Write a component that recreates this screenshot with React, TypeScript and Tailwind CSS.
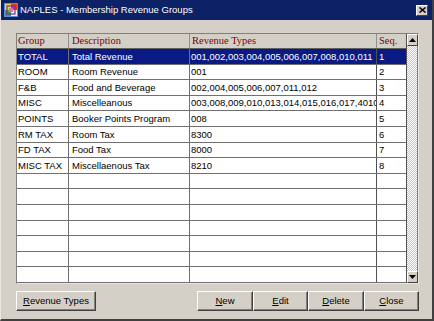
import React from 'react'

const rows = [
  { group: 'TOTAL', desc: 'Total Revenue', types: '001,002,003,004,005,006,007,008,010,011', seq: '1' },
  { group: 'ROOM', desc: 'Room Revenue', types: '001', seq: '2' },
  { group: 'F&B', desc: 'Food and Beverage', types: '002,004,005,006,007,011,012', seq: '3' },
  { group: 'MISC', desc: 'Miscelleanous', types: '003,008,009,010,013,014,015,016,017,4010', seq: '4' },
  { group: 'POINTS', desc: 'Booker Points Program', types: '008', seq: '5' },
  { group: 'RM TAX', desc: 'Room Tax', types: '8300', seq: '6' },
  { group: 'FD TAX', desc: 'Food Tax', types: '8000', seq: '7' },
  { group: 'MISC TAX', desc: 'Miscellaenous Tax', types: '8210', seq: '8' },
]

const blank = Array.from({ length: 7 }, () => ({ group: '', desc: '', types: '', seq: '' }))

const sans = { fontFamily: '"Liberation Sans", Arial, sans-serif' }

const WinButton = ({ label, hot, className }: { label: string; hot: number; className: string }) => (
  <button
    className={`h-[20px] bg-[#d4d0c8] border border-t-white border-l-white border-b-[#404040] border-r-[#404040] shadow-[inset_-1px_-1px_0_#808080] text-[9.5px] text-black flex items-center justify-center ${className}`}
    style={sans}
  >
    {label.slice(0, hot)}
    <span className="underline">{label[hot]}</span>
    {label.slice(hot + 1)}
  </button>
)

const AppIcon = () => (
  <svg width="14" height="14" viewBox="0 0 14 14">
    <rect x="0" y="0" width="14" height="14" fill="#5a8fd0" />
    <rect x="1" y="1" width="6" height="6" fill="#f2d23a" />
    <rect x="7" y="1" width="6" height="6" fill="#d83a2a" />
    <rect x="1" y="7" width="6" height="6" fill="#3aa04a" />
    <rect x="7" y="7" width="6" height="6" fill="#f0f0f0" />
    <rect x="3" y="3" width="8" height="8" fill="none" stroke="#7b2ea0" strokeWidth="1.2" />
    <rect x="5" y="5" width="4" height="4" fill="#e86ab0" />
  </svg>
)

const Row = ({ r, selected }: { r: typeof rows[number]; selected?: boolean }) => (
  <div
    className={`grid grid-cols-[52px_121px_187px_29px] h-[15.67px] border-b border-[#707070] text-[9.5px] leading-none ${
      selected ? 'bg-[#0a1a84] text-white' : 'bg-white text-black'
    }`}
    style={sans}
  >
    <div className="border-r border-[#707070] pl-[1px] flex items-center overflow-hidden whitespace-nowrap">{r.group}</div>
    <div className="border-r border-[#707070] pl-[3px] flex items-center overflow-hidden whitespace-nowrap">{r.desc}</div>
    <div className="border-r border-[#505050] pl-[1px] flex items-center overflow-hidden whitespace-nowrap">{r.types}</div>
    <div className="pl-[2px] flex items-center overflow-hidden whitespace-nowrap">{r.seq}</div>
  </div>
)

const ArrowBtn = ({ up }: { up?: boolean }) => (
  <div className="h-[12px] bg-[#d4d0c8] border border-t-white border-l-white border-b-[#404040] border-r-[#404040] flex items-center justify-center">
    <svg width="7" height="4" viewBox="0 0 7 4">
      {up ? <polygon points="3.5,0 7,4 0,4" fill="#000" /> : <polygon points="0,0 7,0 3.5,4" fill="#000" />}
    </svg>
  </div>
)

export default function App() {
  return (
    <div className="w-[434px] h-[321px] bg-[#d4d0c8] flex flex-col border-l border-l-[#e8e6e0] border-r-2 border-r-[#404040] border-b-2 border-b-[#404040]">
      <div className="h-[20px] bg-[#0c2166] flex items-center pl-[3px] pr-[4px]">
        <AppIcon />
        <span className="ml-[2px] text-white text-[9.5px] flex-1" style={sans}>
          NAPLES - Membership Revenue Groups
        </span>
        <div className="w-[12px] h-[11px] bg-[#d4d0c8] border border-t-white border-l-white border-b-[#404040] border-r-[#404040] flex items-center justify-center">
          <svg width="7" height="6" viewBox="0 0 7 6">
            <path d="M0.5 0.5 L6.5 5.5 M6.5 0.5 L0.5 5.5" stroke="#000" strokeWidth="1.5" />
          </svg>
        </div>
      </div>

      <div className="flex flex-col pl-[15px] pt-[13px]">
        <div className="w-[403px] h-[251px] flex border border-t-[#808080] border-l-[#808080] border-b-[#e8e6e0] border-r-[#e8e6e0]">
          <div className="flex flex-col w-[389px] bg-white">
            <div
              className="grid grid-cols-[52px_121px_187px_29px] h-[15px] bg-[#d4d0c8] border-b border-[#606060] text-[10.5px] text-[#800000] leading-none"
              style={{ fontFamily: '"Liberation Serif", "Times New Roman", serif' }}
            >
              <div className="border-r border-[#909090] pl-[1px] flex items-center">Group</div>
              <div className="border-r border-[#909090] pl-[3px] flex items-center">Description</div>
              <div className="border-r border-[#909090] pl-[2px] flex items-center">Revenue Types</div>
              <div className="pl-[2px] flex items-center">Seq.</div>
            </div>
            {rows.map((r, i) => (
              <Row key={i} r={r} selected={i === 0} />
            ))}
            {blank.map((r, i) => (
              <Row key={'b' + i} r={r} />
            ))}
          </div>
          <div className="w-[12px] flex flex-col border-l border-[#505050]">
            <ArrowBtn up />
            <div className="flex-1 bg-[repeating-conic-gradient(#ffffff_0_25%,#c8c4bc_0_50%)] bg-[length:2px_2px] border-r border-[#808080]" />
            <ArrowBtn />
          </div>
        </div>

        <div className="flex mt-[7px] w-[403px]">
          <WinButton label="Revenue Types" hot={0} className="w-[80px]" />
          <div className="flex-1" />
          <WinButton label="New" hot={0} className="w-[56px]" />
          <WinButton label="Edit" hot={0} className="w-[55px]" />
          <WinButton label="Delete" hot={0} className="w-[56px]" />
          <WinButton label="Close" hot={0} className="w-[55px]" />
        </div>
      </div>
    </div>
  )
}
